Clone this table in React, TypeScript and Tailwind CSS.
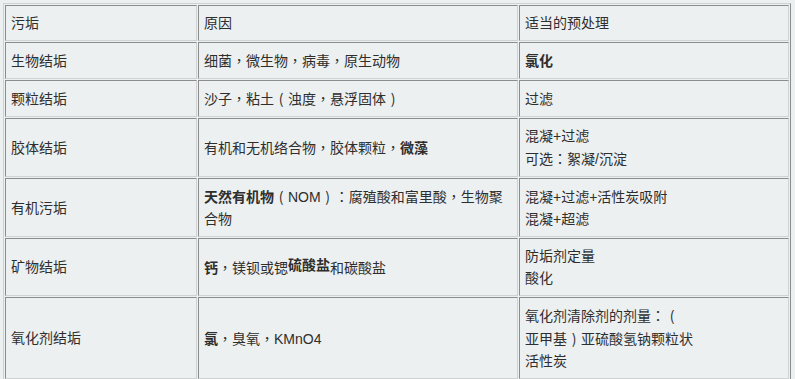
import type { ReactNode } from "react";

const cell =
  "border border-t-[#8c8c8c] border-l-[#8c8c8c] border-r-[#cfd2d3] border-b-[#cfd2d3] px-[5px] py-[6px] align-middle";

// full-width punctuation sits centred in its em box in the reference
function t(s: string): ReactNode[] {
  return s.split(/([，（）：])/).map((part, i) => {
    if (part === "（" || part === "）")
      return (
        <span key={i} className="inline-block w-[14px] text-center font-['Noto_Sans_CJK_SC']">
          {part === "（" ? "(" : ")"}
        </span>
      );
    if (/^[，：]$/.test(part))
      return (
        <span key={i} className="font-['Noto_Sans_CJK_TC']">
          {part}
        </span>
      );
    return part;
  });
}

export default function App() {
  return (
    <div
      className="min-h-screen w-full overflow-hidden bg-[#edf0f1] pt-[3px] pl-[3px] text-[14px] leading-[22px] text-[#2e2e2e]"
      style={{ fontFamily: '"Liberation Sans", "Noto Sans CJK SC", sans-serif' }}
    >
      <table className="w-[788px] table-fixed border-separate border-spacing-[1px] border border-t-[#cfd2d3] border-l-[#cfd2d3] border-r-[#8c8c8c] border-b-[#8c8c8c] text-left">
        <colgroup>
          <col className="w-[192px]" />
          <col className="w-[320px]" />
          <col />
        </colgroup>
        <tbody>
          <tr>
            <td className={cell}>污垢</td>
            <td className={cell}>原因</td>
            <td className={cell}>适当的预处理</td>
          </tr>
          <tr>
            <td className={cell}>生物结垢</td>
            <td className={cell}>{t("细菌，微生物，病毒，原生动物")}</td>
            <td className={cell}>
              <b className="font-bold">氯化</b>
            </td>
          </tr>
          <tr>
            <td className={cell}>颗粒结垢</td>
            <td className={cell}>{t("沙子，粘土（浊度，悬浮固体）")}</td>
            <td className={cell}>过滤</td>
          </tr>
          <tr>
            <td className={cell}>胶体结垢</td>
            <td className={cell}>
              {t("有机和无机络合物，胶体颗粒，")}
              <b className="font-bold">微藻</b>
            </td>
            <td className={cell}>
              混凝+过滤
              <br />
              {t("可选：絮凝/沉淀")}
            </td>
          </tr>
          <tr>
            <td className={cell}>有机污垢</td>
            <td className={cell}>
              <span className="whitespace-nowrap">
                <b className="font-bold">天然有机物</b>
                {t("（NOM）：腐殖酸和富里酸，生物聚")}
              </span>
              <br />
              合物
            </td>
            <td className={cell}>
              混凝+过滤+活性炭吸附
              <br />
              混凝+超滤
            </td>
          </tr>
          <tr>
            <td className={cell}>矿物结垢</td>
            <td className={cell}>
              <b className="font-bold">钙</b>
              {t("，镁钡或锶")}
              <b className="relative -top-[3px] font-bold">硫酸盐</b>和碳酸盐
            </td>
            <td className={cell}>
              防垢剂定量
              <br />
              酸化
            </td>
          </tr>
          <tr>
            <td className={cell}>氧化剂结垢</td>
            <td className={cell}>
              <b className="font-bold">氯</b>
              {t("，臭氧，KMnO4")}
            </td>
            <td className={cell}>
              {t("氧化剂清除剂的剂量：（")}
              <br />
              {t("亚甲基）亚硫酸氢钠颗粒状")}
              <br />
              活性炭
            </td>
          </tr>
        </tbody>
      </table>
      <p className="mt-[2px] whitespace-nowrap text-[14px] leading-[22px] text-[#222]">
        {t("预处理的选择应基于对给水的全面分析，")}
        <a className="text-[#e07a1f]">以确定污染物</a>
        {t("的类型和浓度，然后选择合适的预处理工艺组合。")}
      </p>
    </div>
  );
}
